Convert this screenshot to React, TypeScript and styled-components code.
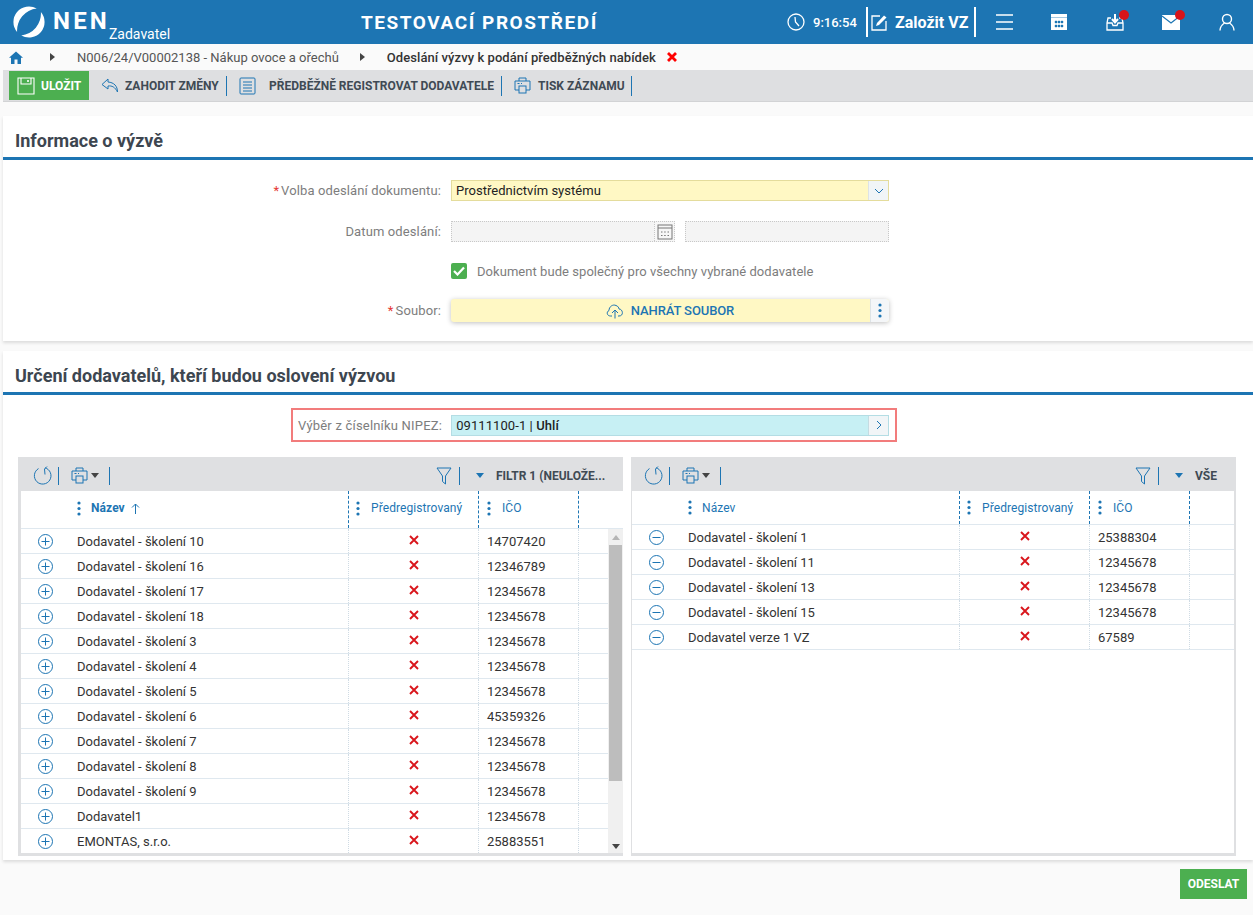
import React from 'react';
import styled, { createGlobalStyle } from 'styled-components';

const BLUE = '#1d75b3';

const GlobalStyle = createGlobalStyle`
  html, body {
    margin: 0;
    padding: 0;
    height: 915px;
    overflow: hidden;
    background: #fafafa;
    font-family: Roboto, "Liberation Sans", sans-serif;
    color: #333;
  }
  * { box-sizing: border-box; }
`;

const Root = styled.div`
  width: 1253px;
  height: 915px;
  display: flex;
  flex-direction: column;
`;

const Header = styled.header`
  height: 44px;
  background: ${BLUE};
  color: white;
  display: flex;
  align-items: center;
  flex: none;
`;

const Brand = styled.div`
  width: 361px;
  padding-left: 13px;
  display: flex;
  align-items: center;
  flex: none;
`;

const BrandName = styled.span`
  margin-left: 8px;
  font-size: 24px;
  font-weight: 700;
  letter-spacing: 3.2px;
  line-height: 44px;
  margin-top: -2px;
`;

const BrandRole = styled.span`
  font-size: 14px;
  margin-left: -1px;
  margin-top: 23px;
  line-height: 20px;
`;

const EnvTitle = styled.div`
  width: 423px;
  flex: none;
  font-size: 19px;
  font-weight: 700;
  letter-spacing: 1.55px;
`;

const Clock = styled.div`
  width: 82px;
  flex: none;
  display: flex;
  align-items: center;
  gap: 8px;
  font-size: 13px;
  font-weight: 500;
  padding-left: 3px;
`;

const NewTender = styled.div`
  width: 110px;
  height: 30px;
  flex: none;
  border-left: 2px solid white;
  border-right: 2px solid white;
  display: flex;
  align-items: center;
  gap: 7px;
  padding-left: 3px;
  font-size: 16px;
  font-weight: 700;
  white-space: nowrap;
`;

const HeaderIcons = styled.div`
  flex: 1;
  display: flex;
  align-items: center;
  padding-left: 19px;
`;

const HeaderIcon = styled.span<{ $w: number }>`
  position: relative;
  width: ${p => p.$w}px;
  height: 20px;
  flex: none;
  display: flex;
  align-items: center;
`;

const Badge = styled.i`
  position: absolute;
  top: -2px;
  left: 13px;
  width: 10px;
  height: 10px;
  border-radius: 50%;
  background: #d7141a;
`;

const Breadcrumb = styled.nav`
  height: 26px;
  flex: none;
  display: flex;
  align-items: center;
  padding-left: 9px;
  font-size: 13px;
  color: #555;
  white-space: nowrap;
`;

const CrumbArrow = styled.span<{ $w: number }>`
  width: 0;
  height: 0;
  border-left: 5px solid #444;
  border-top: 4px solid transparent;
  border-bottom: 4px solid transparent;
  margin-left: ${p => p.$w}px;
  margin-right: 22px;
`;

const CrumbCurrent = styled.b`
  font-weight: 500;
  color: #333;
  letter-spacing: 0.07px;
  margin-right: 11px;
`;

const ActionBar = styled.div`
  height: 32px;
  margin-left: 3px;
  flex: none;
  background: #dedfe1;
  border-bottom: 1px solid #d2d3d5;
  display: flex;
  align-items: center;
  padding-left: 6px;
`;

const SaveButton = styled.div`
  width: 80px;
  height: 29px;
  background: #4caf50;
  color: white;
  display: flex;
  align-items: center;
  gap: 6px;
  padding-left: 8px;
  font-size: 12px;
  font-weight: 700;
`;

const ActionItem = styled.div<{ $w: number; $gap: number }>`
  width: ${p => p.$w}px;
  height: 20px;
  border-right: 1px solid ${BLUE};
  display: flex;
  align-items: center;
  font-size: 12px;
  font-weight: 700;
  color: #404a54;
  white-space: nowrap;
  gap: ${p => p.$gap}px;
  padding-left: 12px;
`;

const Card = styled.section<{ $h: number; $mt: number }>`
  height: ${p => p.$h}px;
  margin-top: ${p => p.$mt}px;
  margin-left: 3px;
  flex: none;
  background: white;
  box-shadow: 0 2px 3px rgba(0, 0, 0, 0.12);
`;

const CardTitle = styled.h2`
  height: 44px;
  margin: 0;
  padding: 7px 0 0 12px;
  display: flex;
  align-items: center;
  font-size: 18px;
  font-weight: 700;
  color: #3d4650;
  border-bottom: 3px solid ${BLUE};
`;

const FormRow = styled.div<{ $mt: number }>`
  display: flex;
  align-items: center;
  margin-top: ${p => p.$mt}px;
`;

const Label = styled.label`
  width: 438px;
  flex: none;
  text-align: right;
  font-size: 13px;
  letter-spacing: 0.12px;
  color: #7d7d7d;
`;

const Star = styled.span`
  color: #e53935;
  margin-right: 2px;
`;

const SelectBox = styled.div`
  margin-left: 10px;
  width: 438px;
  height: 21px;
  display: flex;
  align-items: center;
  background: #fff8c4;
  border: 1px solid #e4dc9c;
  font-size: 13px;
  letter-spacing: 0.03px;
  color: #222;
  padding-left: 4px;
`;

const SelectArrow = styled.span`
  margin-left: auto;
  width: 20px;
  height: 19px;
  background: #f1f5f7;
  border-left: 1px solid #dde3e6;
  display: flex;
  align-items: center;
  justify-content: center;
`;

const DisabledInput = styled.div<{ $w: number; $ml: number }>`
  width: ${p => p.$w}px;
  margin-left: ${p => p.$ml}px;
  height: 21px;
  background: #f4f4f4;
  border: 1px dotted #c8c8c8;
  display: flex;
  justify-content: flex-end;
  align-items: center;
`;

const CalendarCell = styled.span`
  width: 20px;
  height: 19px;
  background: #f7f7f7;
  border-left: 1px dotted #c8c8c8;
  display: flex;
  align-items: center;
  justify-content: center;
`;

const CheckRow = styled.div`
  display: flex;
  align-items: center;
  margin: 21px 0 0 448px;
  gap: 10px;
  font-size: 13px;
  letter-spacing: 0.05px;
  color: #7d7d7d;
`;

const CheckBox = styled.span`
  width: 16px;
  height: 16px;
  background: #4caf50;
  border-radius: 2px;
  display: flex;
  align-items: center;
  justify-content: center;
`;

const UploadWrap = styled.div`
  margin-left: 10px;
  width: 438px;
  height: 23px;
  display: flex;
  background: #fff8c4;
  border-radius: 3px;
  box-shadow: 0 1px 5px rgba(0, 0, 0, 0.25);
`;

const UploadMain = styled.div`
  flex: 1;
  display: flex;
  align-items: center;
  justify-content: center;
  gap: 7px;
  padding-left: 19px;
  font-size: 13px;
  font-weight: 500;
  letter-spacing: -0.1px;
  color: ${BLUE};
`;

const UploadMore = styled.span`
  width: 19px;
  background: #f4f6f8;
  border-left: 1px solid #dde3e6;
  border-radius: 0 3px 3px 0;
  display: flex;
  align-items: center;
  justify-content: center;
`;

const NipezFrame = styled.div`
  width: 606px;
  height: 34px;
  margin: 13px 0 0 288px;
  border: 2px solid #f27c7c;
  display: flex;
  align-items: center;
  padding-left: 5px;
  font-size: 13px;
  letter-spacing: 0.2px;
  color: #7d7d7d;
`;

const NipezInput = styled.div`
  margin-left: 9px;
  width: 438px;
  height: 21px;
  display: flex;
  align-items: center;
  background: #c7f0f4;
  border: 1px solid #b4dde4;
  padding-left: 4px;
  color: #222;
`;

const NipezValue = styled.span`
  letter-spacing: 0.08px;
  b { font-weight: 500; }
`;

const NipezArrow = styled.span`
  margin-left: auto;
  width: 20px;
  height: 19px;
  background: #f1f5f7;
  border-left: 1px solid #c5dce2;
  display: flex;
  align-items: center;
  justify-content: center;
`;

const Grids = styled.div`
  display: flex;
  gap: 8px;
  margin: 15px 0 0 15px;
`;

const Panel = styled.div<{ $pl: number; $pr: number }>`
  width: 605px;
  height: 399px;
  background: #dfe0e2;
  padding: 0 ${p => p.$pr}px 3px ${p => p.$pl}px;
  display: flex;
  flex-direction: column;
`;

const GridToolbar = styled.div<{ $left: number; $ml: number; $mr: number }>`
  height: 34px;
  flex: none;
  margin: 0 -${p => p.$mr}px 0 -${p => p.$ml}px;
  display: flex;
  align-items: center;
  padding: 3px 0 0 ${p => p.$left}px;
`;

const ToolSep = styled.span<{ $ml: number }>`
  width: 1px;
  height: 18px;
  background: ${BLUE};
  margin-left: ${p => p.$ml}px;
`;

const ToolIcon = styled.span<{ $ml?: number }>`
  display: flex;
  align-items: center;
  margin-left: ${p => p.$ml ?? 0}px;
`;

const DownTriangle = styled.span<{ $color: string; $ml: number }>`
  width: 0;
  height: 0;
  border-top: 5px solid ${p => p.$color};
  border-left: 4.5px solid transparent;
  border-right: 4.5px solid transparent;
  margin-left: ${p => p.$ml}px;
`;

const FilterName = styled.span<{ $w: number }>`
  width: ${p => p.$w}px;
  margin-left: 12px;
  font-size: 12px;
  font-weight: 700;
  color: #404a54;
  white-space: nowrap;
`;

const ToolSpacer = styled.span`
  flex: 1;
`;

const TableBody = styled.div`
  flex: 1;
  background: white;
  display: flex;
  flex-direction: column;
  min-height: 0;
  overflow: hidden;
`;

const Row = styled.div<{ $h: number }>`
  height: ${p => p.$h}px;
  flex: none;
  display: grid;
  grid-template-columns: 328px 130px 100px 1fr;
  border-bottom: 1px solid #dfe8ef;
  font-size: 13px;
  color: #333;
`;

const Cell = styled.div<{ $pad?: number; $center?: boolean }>`
  display: flex;
  align-items: center;
  min-width: 0;
  padding-left: ${p => p.$pad ?? 0}px;
  justify-content: ${p => (p.$center ? 'center' : 'flex-start')};
  border-right: 1px dotted #cfdbe4;
  white-space: nowrap;
  &:last-child { border-right: none; }
`;

const CrossWrap = styled.span`
  display: flex;
  margin-bottom: 2px;
`;

const HeadCell = styled.div<{ $pad: number; $pb: number }>`
  display: flex;
  align-items: center;
  gap: 11px;
  padding-left: ${p => p.$pad}px;
  padding-bottom: ${p => p.$pb}px;
  border-right: 1px dashed ${BLUE};
  color: ${BLUE};
  font-size: 12px;
  letter-spacing: 0.08px;
  white-space: nowrap;
`;

const NameHead = styled.span<{ $bold?: boolean }>`
  font-weight: ${p => (p.$bold ? 700 : 400)};
  display: flex;
  align-items: center;
  gap: 6px;
  margin-left: -1px;
`;

const RowIcon = styled.span`
  width: 56px;
  padding-left: 17px;
  flex: none;
  display: flex;
  align-items: center;
`;

const Rows = styled.div`
  flex: 1;
  display: flex;
  min-height: 0;
`;

const RowList = styled.div`
  flex: 1;
  min-width: 0;
`;

const ScrollBar = styled.div`
  width: 15px;
  flex: none;
  background: #f0f0f0;
  display: flex;
  flex-direction: column;
  align-items: center;
  padding-top: 6px;
`;

const ScrollUp = styled.span`
  border-bottom: 5px solid #b5b5b5;
  border-left: 4px solid transparent;
  border-right: 4px solid transparent;
`;

const ScrollThumb = styled.span`
  width: 13px;
  height: 236px;
  margin-top: 5px;
  background: #bdbdbd;
`;

const ScrollDown = styled.span`
  margin-top: auto;
  margin-bottom: 4px;
  border-top: 5px solid #444;
  border-left: 4px solid transparent;
  border-right: 4px solid transparent;
`;

const Footer = styled.footer`
  flex: 1;
  display: flex;
  justify-content: flex-end;
  align-items: flex-start;
  padding: 9px 6px 0 0;
`;

const SendButton = styled.div`
  width: 67px;
  height: 30px;
  background: #4caf50;
  color: white;
  font-size: 12px;
  font-weight: 700;
  display: flex;
  align-items: center;
  justify-content: center;
`;

const CRESCENT = 'M23.75 2.6 A15.5 15.5 0 0 0 4.1 26 A22 22 0 0 1 23.75 2.6 Z';

const Logo = () => (
  <svg width="32" height="32" viewBox="0 0 32 32" fill="white">
    <path d={CRESCENT} />
    <path d={CRESCENT} transform="rotate(180 16 16)" />
  </svg>
);

const ClockIcon = () => (
  <svg width="18" height="18" viewBox="0 0 18 18" fill="none" stroke="white" strokeWidth="1.3">
    <circle cx="9" cy="9" r="8" />
    <path d="M8 4 L8.5 9 L12 13" />
  </svg>
);

const EditIcon = () => (
  <svg width="17" height="17" viewBox="0 0 17 17" fill="none" stroke="white" strokeWidth="1.3">
    <path d="M9 2 H1 V16 H15 V7" />
    <path d="M5 12 L6 9 L13 1.5 L15.5 3.5 L8 11 Z" fill="white" stroke="none" />
  </svg>
);

const MenuIcon = () => (
  <svg width="18" height="18" viewBox="0 0 18 18" stroke="white" strokeWidth="1.6">
    <path d="M1 2 H18 M1 9 H18 M1 16 H18" />
  </svg>
);

const CalendarIcon = () => (
  <svg width="18" height="18" viewBox="0 0 18 18">
    <path d="M1 1 H17 V17 H1 Z" fill="white" />
    <path d="M5 8 h2 v2 h-2 z M8 8 h2 v2 h-2 z M11 8 h2 v2 h-2 z M5 12 h2 v2 h-2 z M8 12 h2 v2 h-2 z M11 12 h2 v2 h-2 z M1 4.5 h16" fill={BLUE} stroke={BLUE} strokeWidth="0.4" />
  </svg>
);

const InboxIcon = () => (
  <svg width="18" height="18" viewBox="0 0 18 18" fill="none" stroke="white" strokeWidth="1.3">
    <path d="M5 5 H2 L1 10 V17 H17 V10 L16 5 H13" />
    <path d="M1 10 H6 L7 12.5 H11 L12 10 H17" />
    <path d="M9 1 V9 M6 6 L9 9.5 L12 6" strokeWidth="2" />
  </svg>
);

const MailIcon = () => (
  <svg width="18" height="15" viewBox="0 0 18 15">
    <path d="M0 0 H18 V15 H0 Z" fill="white" />
    <path d="M0 1 L9 8 L18 1" fill="none" stroke={BLUE} strokeWidth="1.2" />
  </svg>
);

const UserIcon = () => (
  <svg width="16" height="18" viewBox="0 0 16 18" fill="none" stroke="white" strokeWidth="1.4">
    <circle cx="8" cy="6" r="4.5" />
    <path d="M1 17.5 C1 13 4 11 5.5 10 M15 17.5 C15 13 12 11 10.5 10" />
  </svg>
);

const HomeIcon = () => (
  <svg width="14" height="13" viewBox="0 0 14 13" fill={BLUE}>
    <path d="M7 0.5 L14 6.8 H12 V13 H8.5 V8.5 H5.5 V13 H2 V6.8 H0 Z" />
  </svg>
);

const RedCross = ({ size, bold }: { size: number; bold?: boolean }) => (
  <svg width={size} height={size} viewBox="0 0 10 10" stroke={bold ? '#f00' : '#d9161c'} strokeWidth={bold ? 2.8 : 1.9}>
    <path d="M1 1 L9 9 M9 1 L1 9" />
  </svg>
);

const SaveIcon = () => (
  <svg width="18" height="18" viewBox="0 0 18 18" fill="none" stroke="white" strokeWidth="1.1">
    <path d="M1 1 H17 V17 H1 Z M4 1 V7 H14 V1 M4 17 H14" />
    <path d="M11 3 V5" strokeWidth="1.6" />
  </svg>
);

const ReplyIcon = () => (
  <svg width="18" height="15" viewBox="0 0 18 15" fill="none" stroke={BLUE} strokeWidth="1">
    <path d="M7 1 L1 6.5 L7 11 V8 C11 7.5 14 9 16.5 14 C16.5 8 13 4.5 7 4 Z" />
  </svg>
);

const ListIcon = () => (
  <svg width="17" height="18" viewBox="0 0 17 18" fill="none" stroke={BLUE} strokeWidth="1">
    <rect x="1" y="1" width="15" height="16" rx="1" />
    <path d="M4 5 H13 M4 8 H13 M4 11 H13 M4 14 H13" />
  </svg>
);

const PrintIcon = () => (
  <svg width="17" height="17" viewBox="0 0 17 17" fill="none" stroke={BLUE} strokeWidth="1">
    <path d="M5 4 V1 H12 V4 M5 13 H1 V4 H16 V13 H12" />
    <rect x="5" y="9" width="7" height="7" fill="#dedfe1" />
    <path d="M3.5 6.5 h2 M7 6.5 h1" strokeWidth="1.2" />
  </svg>
);

const RefreshIcon = () => (
  <svg width="19" height="19" viewBox="0 0 19 19" fill="none" stroke={BLUE} strokeWidth="1">
    <path d="M12 1.8 A8.3 8.3 0 1 1 5.5 2.6" />
    <path d="M14 0.5 L11.5 3 L12 8.5" />
  </svg>
);

const FilterIcon = () => (
  <svg width="16" height="18" viewBox="0 0 16 18" fill="none" stroke={BLUE} strokeWidth="1">
    <path d="M1 1 H15 L9.5 9 V17 L6.5 14.5 V9 Z" />
  </svg>
);

const SortArrow = () => (
  <svg width="9" height="11" viewBox="0 0 9 11" fill="none" stroke={BLUE} strokeWidth="1">
    <path d="M4.5 11 V1 M1 4.5 L4.5 1 L8 4.5" />
  </svg>
);

const Dots = () => (
  <svg width="4" height="15" viewBox="0 0 4 15" fill={BLUE}>
    <circle cx="2" cy="2" r="1.6" />
    <circle cx="2" cy="7.5" r="1.6" />
    <circle cx="2" cy="13" r="1.6" />
  </svg>
);

const CircleIcon = ({ minus }: { minus?: boolean }) => (
  <svg width="15" height="15" viewBox="0 0 15 15" fill="none" stroke={BLUE} strokeWidth="1">
    <circle cx="7.5" cy="7.5" r="7" />
    <path d={minus ? 'M3.5 7.5 H11.5' : 'M3.5 7.5 H11.5 M7.5 3.5 V11.5'} />
  </svg>
);

const Chevron = ({ right }: { right?: boolean }) => (
  <svg width="10" height="10" viewBox="0 0 10 10" fill="none" stroke={BLUE} strokeWidth="1">
    <path d={right ? 'M3 1 L7 5 L3 9' : 'M1 3 L5 7 L9 3'} />
  </svg>
);

const CalendarSmall = () => (
  <svg width="16" height="16" viewBox="0 0 16 16" fill="none" stroke="#777" strokeWidth="1">
    <rect x="1" y="1" width="14" height="14" />
    <path d="M1 4 H15 M4 8 h1.5 M7.2 8 h1.5 M10.5 8 h1.5 M4 11.5 h1.5 M7.2 11.5 h1.5 M10.5 11.5 h1.5" />
  </svg>
);

const CloudIcon = () => (
  <svg width="18" height="16" viewBox="0 0 18 16" fill="none" stroke={BLUE} strokeWidth="1">
    <path d="M6 13 H4.5 C1 13 0 9 3 7.5 C3 3.5 7 1 10 2.5 C12 3 13 5 13 6 C17 6 18 13 13 13 H12" />
    <path d="M9 15.5 V7 M6 10 L9 7 L12 10" />
  </svg>
);

const leftRows = [
  ['Dodavatel - školení 10', '14707420'],
  ['Dodavatel - školení 16', '12346789'],
  ['Dodavatel - školení 17', '12345678'],
  ['Dodavatel - školení 18', '12345678'],
  ['Dodavatel - školení 3', '12345678'],
  ['Dodavatel - školení 4', '12345678'],
  ['Dodavatel - školení 5', '12345678'],
  ['Dodavatel - školení 6', '45359326'],
  ['Dodavatel - školení 7', '12345678'],
  ['Dodavatel - školení 8', '12345678'],
  ['Dodavatel - školení 9', '12345678'],
  ['Dodavatel1', '12345678'],
  ['EMONTAS, s.r.o.', '25883551'],
];

const rightRows = [
  ['Dodavatel - školení 1', '25388304'],
  ['Dodavatel - školení 11', '12345678'],
  ['Dodavatel - školení 13', '12345678'],
  ['Dodavatel - školení 15', '12345678'],
  ['Dodavatel verze 1 VZ', '67589'],
];

const TableHead = ({ h, sorted }: { h: number; sorted?: boolean }) => {
  const pb = sorted ? 3 : 0;
  return (
    <Row $h={h}>
      <HeadCell $pad={56} $pb={pb}>
        <Dots />
        <NameHead $bold={sorted}>Název {sorted && <SortArrow />}</NameHead>
      </HeadCell>
      <HeadCell $pad={7} $pb={pb}>
        <Dots />
        <span>Předregistrovaný</span>
      </HeadCell>
      <HeadCell $pad={8} $pb={pb}>
        <Dots />
        <span>IČO</span>
      </HeadCell>
      <div />
    </Row>
  );
};

const TableRow = ({ name, ico, minus }: { name: string; ico: string; minus?: boolean }) => (
  <Row $h={25}>
    <Cell>
      <RowIcon>
        <CircleIcon minus={minus} />
      </RowIcon>
      {name}
    </Cell>
    <Cell $center>
      <CrossWrap>
        <RedCross size={10} />
      </CrossWrap>
    </Cell>
    <Cell $pad={8}>{ico}</Cell>
    <Cell />
  </Row>
);

const App: React.FC = () => (
  <Root>
    <GlobalStyle />
    <Header>
      <Brand>
        <Logo />
        <BrandName>NEN</BrandName>
        <BrandRole>Zadavatel</BrandRole>
      </Brand>
      <EnvTitle>TESTOVACÍ PROSTŘEDÍ</EnvTitle>
      <Clock>
        <ClockIcon />
        9:16:54
      </Clock>
      <NewTender>
        <EditIcon />
        Založit VZ
      </NewTender>
      <HeaderIcons>
        <HeaderIcon $w={55}><MenuIcon /></HeaderIcon>
        <HeaderIcon $w={56}><CalendarIcon /></HeaderIcon>
        <HeaderIcon $w={56}><InboxIcon /><Badge /></HeaderIcon>
        <HeaderIcon $w={57}><MailIcon /><Badge /></HeaderIcon>
        <HeaderIcon $w={20}><UserIcon /></HeaderIcon>
      </HeaderIcons>
    </Header>

    <Breadcrumb>
      <HomeIcon />
      <CrumbArrow $w={27} />
      <span>N006/24/V00002138 - Nákup ovoce a ořechů</span>
      <CrumbArrow $w={21} />
      <CrumbCurrent>Odeslání výzvy k podání předběžných nabídek</CrumbCurrent>
      <RedCross size={10} bold />
    </Breadcrumb>

    <ActionBar>
      <SaveButton>
        <SaveIcon />
        ULOŽIT
      </SaveButton>
      <ActionItem $w={138} $gap={6}>
        <ReplyIcon />
        ZAHODIT ZMĚNY
      </ActionItem>
      <ActionItem $w={275} $gap={13}>
        <ListIcon />
        PŘEDBĚŽNĚ REGISTROVAT DODAVATELE
      </ActionItem>
      <ActionItem $w={130} $gap={7}>
        <PrintIcon />
        TISK ZÁZNAMU
      </ActionItem>
    </ActionBar>

    <Card $h={225} $mt={14}>
      <CardTitle>Informace o výzvě</CardTitle>
      <FormRow $mt={20}>
        <Label><Star>*</Star>Volba odeslání dokumentu:</Label>
        <SelectBox>
          Prostřednictvím systému
          <SelectArrow><Chevron /></SelectArrow>
        </SelectBox>
      </FormRow>
      <FormRow $mt={20}>
        <Label>Datum odeslání:</Label>
        <DisabledInput $w={224} $ml={10}>
          <CalendarCell><CalendarSmall /></CalendarCell>
        </DisabledInput>
        <DisabledInput $w={204} $ml={10} />
      </FormRow>
      <CheckRow>
        <CheckBox>
          <svg width="12" height="10" viewBox="0 0 12 10" fill="none" stroke="white" strokeWidth="2.2">
            <path d="M1 5 L4.5 8.5 L11 1.5" />
          </svg>
        </CheckBox>
        Dokument bude společný pro všechny vybrané dodavatele
      </CheckRow>
      <FormRow $mt={20}>
        <Label><Star>*</Star>Soubor:</Label>
        <UploadWrap>
          <UploadMain>
            <CloudIcon />
            NAHRÁT SOUBOR
          </UploadMain>
          <UploadMore><Dots /></UploadMore>
        </UploadWrap>
      </FormRow>
    </Card>

    <Card $h={509} $mt={10}>
      <CardTitle>Určení dodavatelů, kteří budou oslovení výzvou</CardTitle>
      <NipezFrame>
        Výběr z číselníku NIPEZ:
        <NipezInput>
          <NipezValue>09111100-1 | <b>Uhlí</b></NipezValue>
          <NipezArrow><Chevron right /></NipezArrow>
        </NipezInput>
      </NipezFrame>
      <Grids>
        <Panel $pl={3} $pr={0}>
          <GridToolbar $left={15} $ml={3} $mr={0}>
            <ToolIcon><RefreshIcon /></ToolIcon>
            <ToolSep $ml={6} />
            <ToolIcon $ml={12}><PrintIcon /></ToolIcon>
            <DownTriangle $color="#444" $ml={3} />
            <ToolSep $ml={10} />
            <ToolSpacer />
            <ToolIcon><FilterIcon /></ToolIcon>
            <ToolSep $ml={7} />
            <DownTriangle $color={BLUE} $ml={16} />
            <FilterName $w={127}>FILTR 1 (NEULOŽE...</FilterName>
          </GridToolbar>
          <TableBody>
            <TableHead h={38} sorted />
            <Rows>
              <RowList>
                {leftRows.map(([name, ico]) => (
                  <TableRow key={name} name={name} ico={ico} />
                ))}
              </RowList>
              <ScrollBar>
                <ScrollUp />
                <ScrollThumb />
                <ScrollDown />
              </ScrollBar>
            </Rows>
          </TableBody>
        </Panel>
        <Panel $pl={1} $pr={2}>
          <GridToolbar $left={13} $ml={1} $mr={2}>
            <ToolIcon><RefreshIcon /></ToolIcon>
            <ToolSep $ml={6} />
            <ToolIcon $ml={12}><PrintIcon /></ToolIcon>
            <DownTriangle $color="#444" $ml={3} />
            <ToolSep $ml={10} />
            <ToolSpacer />
            <ToolIcon><FilterIcon /></ToolIcon>
            <ToolSep $ml={7} />
            <DownTriangle $color={BLUE} $ml={16} />
            <FilterName $w={41}>VŠE</FilterName>
          </GridToolbar>
          <TableBody>
            <TableHead h={34} />
            {rightRows.map(([name, ico]) => (
              <TableRow key={name} name={name} ico={ico} minus />
            ))}
          </TableBody>
        </Panel>
      </Grids>
    </Card>

    <Footer>
      <SendButton>ODESLAT</SendButton>
    </Footer>
  </Root>
);

export default App;
